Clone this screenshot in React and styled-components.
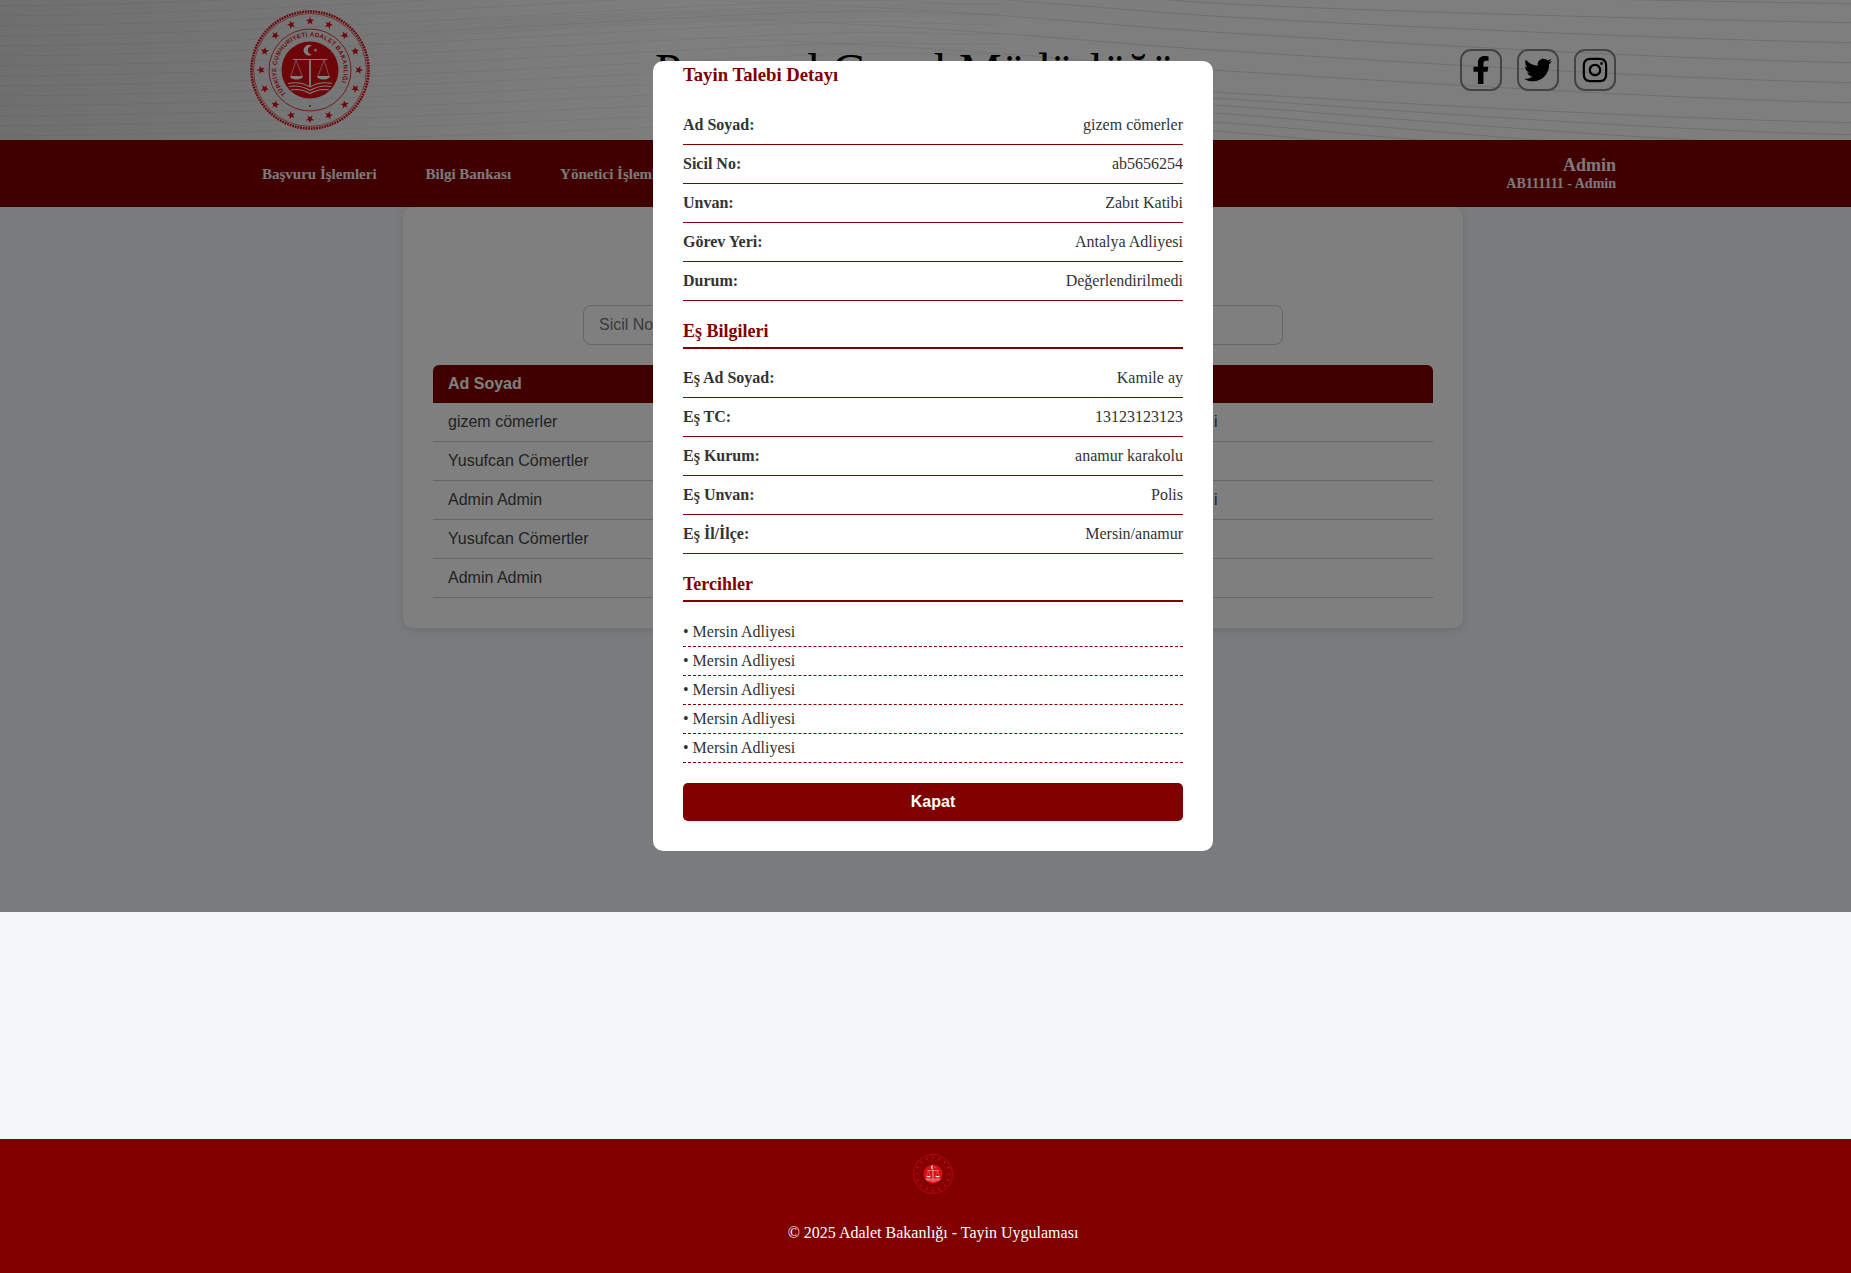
import React from 'react';
import styled, { createGlobalStyle } from 'styled-components';
import { FaFacebookF, FaTwitter, FaInstagram } from 'react-icons/fa';

const Global = createGlobalStyle`
  html, body { margin: 0; padding: 0; overflow-x: hidden; background: #f4f6f9; }
  body { font-family: "Liberation Serif", "Times New Roman", serif; color: #333; }
  * { box-sizing: border-box; }
`;

const Page = styled.div`
  position: relative;
  width: 1866px;
  min-height: 1273px;
  display: flex;
  flex-direction: column;
`;
const Header = styled.header`
  position: relative;
  height: 140px;
  background: linear-gradient(90deg, #dedede 0%, #eeeeee 18%, #fcfcfc 35%, #fdfdfd 100%);
  overflow: hidden;
`;
const Waves = styled.svg`
  position: absolute;
  inset: 0;
  width: 100%;
  height: 100%;
`;
const HeaderInner = styled.div`
  position: relative;
  width: 1366px;
  height: 100%;
  margin: 0 auto;
  display: flex;
  align-items: center;
  justify-content: space-between;
`;
const SiteTitle = styled.h1`
  margin: 0;
  font-size: 48px;
  font-weight: 400;
  color: #000;
  white-space: nowrap;
`;
const Socials = styled.div`
  display: flex;
  gap: 15px;
`;
const SocialLink = styled.a`
  width: 42px;
  height: 42px;
  border: 2px solid #888;
  border-radius: 11px;
  display: flex;
  align-items: center;
  justify-content: center;
  color: #000;
  font-size: 28px;
`;
const Nav = styled.nav`
  height: 67px;
  background: #800000;
`;
const NavInner = styled.div`
  width: 1366px;
  height: 100%;
  margin: 0 auto;
  padding-left: 12px;
  display: flex;
  align-items: center;
  justify-content: space-between;
`;
const NavLinks = styled.div`
  display: flex;
  gap: 49px;
  padding-top: 2px;
`;
const NavLink = styled.a`
  color: #fff;
  font-size: 15px;
  font-weight: 700;
  opacity: 0.95;
`;
const UserBox = styled.div`
  text-align: right;
  color: #fff;
  font-weight: 700;
  opacity: 0.95;
`;
const UserName = styled.div`
  font-size: 18px;
  line-height: 16px;
`;
const UserMeta = styled.div`
  margin-top: 4px;
  font-size: 14px;
  line-height: 14px;
`;
const Main = styled.main`
  flex: 1;
  display: flex;
  justify-content: center;
  align-items: flex-start;
`;
const Card = styled.section`
  width: 1060px;
  padding: 98px 30px 30px;
  background: #fff;
  border-radius: 10px;
  box-shadow: 0 2px 10px rgba(0, 0, 0, 0.1);
  font-family: "Liberation Sans", Arial, sans-serif;
`;
const SearchInput = styled.input`
  display: block;
  width: 700px;
  height: 40px;
  margin: 0 auto 20px;
  padding: 0 15px;
  border: 1px solid #ccc;
  border-radius: 8px;
  font: 16px "Liberation Sans", Arial, sans-serif;
  background: transparent;
  &::placeholder { color: #757575; }
`;
const Table = styled.table`
  width: 1000px;
  border-collapse: separate;
  border-spacing: 0;
  table-layout: fixed;
  font-size: 16px;
`;
const HeadCell = styled.th`
  height: 38px;
  padding: 0 15px;
  width: ${p => p.$width || 'auto'};
  text-align: left;
  background: #800000;
  color: #fff;
  font-weight: 700;
  &:first-child { border-top-left-radius: 6px; }
  &:last-child { border-top-right-radius: 6px; }
`;
const BodyCell = styled.td`
  height: 39px;
  padding: 0 15px 1px;
  color: #444;
  white-space: nowrap;
  overflow: hidden;
  border-bottom: 1px solid #ccc;
`;
const Footer = styled.footer`
  height: 134px;
  padding-top: 15px;
  background: #800000;
  color: #fff;
  text-align: center;
`;
const FooterText = styled.p`
  margin: 16px 0 0;
  font-size: 16px;
  line-height: 46px;
`;
const FooterLogoSlot = styled.div`
  display: flex;
  justify-content: center;
`;
const Overlay = styled.div`
  position: absolute;
  top: 0;
  left: 0;
  width: 100%;
  height: 912px;
  background: rgba(0, 0, 0, 0.5);
  display: flex;
  align-items: center;
  justify-content: center;
`;
const Modal = styled.div`
  width: 560px;
  height: 790px;
  padding: 3px 30px 30px;
  background: #fff;
  border-radius: 10px;
  display: flex;
  flex-direction: column;
`;
const ModalTitle = styled.h2`
  margin: 0 0 21px;
  font-size: 18.72px;
  line-height: 21px;
  color: #800000;
`;
const InfoRow = styled.div`
  display: flex;
  justify-content: space-between;
  padding: 10px 0;
  line-height: 18px;
  font-size: 16px;
  border-bottom: 1px solid #800000;
  color: #333;
`;
const InfoLabel = styled.strong`
  font-weight: 700;
`;
const SectionTitle = styled.h3`
  margin: 20px 0 10px;
  padding-bottom: 6px;
  font-size: 18px;
  line-height: 20px;
  color: #800000;
  border-bottom: 2px solid #800000;
`;
const PrefList = styled.ul`
  list-style: none;
  margin: 6px 0 20px;
  padding: 0;
`;
const PrefItem = styled.li`
  padding: 5px 0;
  line-height: 18px;
  font-size: 16px;
  border-bottom: 1px dashed #800000;
  color: #333;
`;
const CloseButton = styled.button`
  height: 38px;
  border: 0;
  border-radius: 5px;
  background: #800000;
  color: #fff;
  font: 700 16px "Liberation Sans", Arial, sans-serif;
`;

const STAR = 'M0,-3.6 L0.85,-1.15 L3.42,-1.1 L1.37,0.44 L2.11,2.91 L0,1.45 L-2.11,2.91 L-1.37,0.44 L-3.42,-1.1 L-0.85,-1.15 Z';
const RED = '#dc0d12';

function Logo({ size, compact }) {
  const stars = Array.from({ length: 16 }, (_, i) => (i * 22.5 * Math.PI) / 180);
  const id = compact ? 'ringc' : 'ring';
  return (
    <svg width={size} height={size} viewBox="0 0 120 120" aria-label="Adalet Bakanlığı">
      <circle cx="60" cy="60" r="58.5" fill="none" stroke={RED} strokeWidth="2.6" strokeDasharray="1.8 0.9" />
      <circle cx="60" cy="60" r="56.4" fill="none" stroke={RED} strokeWidth="0.6" />
      {stars.map((a, i) => (
        <path key={i} d={STAR} fill={RED} transform={`translate(${60 + 49 * Math.sin(a)} ${60 - 49 * Math.cos(a)}) rotate(${(a * 180) / Math.PI}) scale(1.2)`} />
      ))}
      <circle cx="60" cy="60" r="41" fill="none" stroke={RED} strokeWidth="0.8" />
      {!compact && (
        <>
          <defs>
            <path id={id} d="M 36.2 84 A 33.7 33.7 0 1 1 83.8 84" />
          </defs>
          <text fontFamily="Liberation Sans, Arial, sans-serif" fontSize="6.1" fontWeight="700" fill={RED} letterSpacing="0.32">
            <textPath href={`#${id}`}>TÜRKİYE CUMHURİYETİ ADALET BAKANLIĞI</textPath>
          </text>
        </>
      )}
      <circle cx="60" cy="96" r="1" fill={RED} />
      <circle cx="60" cy="60" r="28.5" fill={RED} />
      <path d="M62,36 a5.2,5.2 0 1 0 0,8.4 a4.2,4.2 0 1 1 0,-8.4 Z" fill="#fff" />
      <path d={STAR} fill="#fff" transform="translate(65.5 40.2) scale(0.6)" />
      <g stroke="#fff" strokeWidth="1.1" fill="none">
        <path d="M43,49.5 H77" />
        <path d="M60,49 V76" strokeWidth="1.8" />
        <path d="M46,50 L41,66 M46,50 L52,66 M74,50 L68,66 M74,50 L79,66" strokeWidth="0.6" />
      </g>
      <path d="M40,66 H53 a6.5,3.6 0 0 1 -13,0 Z M67,66 H80 a6.5,3.6 0 0 1 -13,0 Z" fill="#fff" />
      <g stroke="#fff" strokeWidth="1.1" fill="none">
        <path d="M38,73.5 Q50,71 60,77 Q70,71 82,73.5" />
        <path d="M39,76.5 Q50,74.5 60,80.5 Q70,74.5 81,76.5" />
        <path d="M41,80 Q50,78 60,83.5 Q70,78 79,80" />
      </g>
    </svg>
  );
}

const RIGHT_A = [-12, 3, 16, 32, 50, 70, 92, 98, 105, 113, 122, 131];
const RIGHT_B = [3, 22, 42, 62, 82, 102, 122, 134, 146, 158, 170, 182];

function WaveLines() {
  const left = Array.from({ length: 15 }, (_, i) => {
    const y = 6 + i * 10;
    return `M0,${y} C220,${y - 2} 420,${y - 8 - (14 - i) * 0.6} 680,${y - 20 - (14 - i) * 0.8} S900,${y - 30} 1000,${y - 32}`;
  });
  const crest = Array.from({ length: 7 }, (_, i) => {
    const y = 30 - i * 2;
    return `M330,${y + 14} C480,${y + 2} 620,${y - 6} 840,${y - 12} S1100,${y - 14} 1250,${y - 6}`;
  });
  const right = RIGHT_A.map((a, i) => {
    const b = RIGHT_B[i];
    return `M600,${a - 34} C900,${a - 30} 1100,${a - 7} 1213,${a} S1650,${b - 3} 1866,${b + 1}`;
  });
  return (
    <Waves viewBox="0 0 1866 140" aria-hidden="true">
      <defs>
        <linearGradient id="waveFade" gradientUnits="userSpaceOnUse" x1="600" y1="0" x2="1180" y2="0">
          <stop offset="0" stopColor="#000" stopOpacity="0" />
          <stop offset="1" stopColor="#000" stopOpacity="0.12" />
        </linearGradient>
        <linearGradient id="crestFade" gradientUnits="userSpaceOnUse" x1="330" y1="0" x2="1250" y2="0">
          <stop offset="0" stopColor="#000" stopOpacity="0" />
          <stop offset="0.3" stopColor="#000" stopOpacity="0.05" />
          <stop offset="1" stopColor="#000" stopOpacity="0" />
        </linearGradient>
      </defs>
      {left.map((d, i) => <path key={i} d={d} fill="none" stroke="#000" strokeOpacity="0.05" />)}
      {crest.map((d, i) => <path key={i} d={d} fill="none" stroke="url(#crestFade)" />)}
      {right.map((d, i) => <path key={i} d={d} fill="none" stroke="url(#waveFade)" />)}
    </Waves>
  );
}

const people = [
  ['gizem cömerler', 'ab5656254', 'Zabıt Katibi', 'Değerlendirilmedi'],
  ['Yusufcan Cömertler', 'ab1234567', 'Zabıt Katibi', 'Onaylandı'],
  ['Admin Admin', 'AB111111', 'Admin', 'Değerlendirilmedi'],
  ['Yusufcan Cömertler', 'ab1234567', 'Zabıt Katibi', 'Onaylandı'],
  ['Admin Admin', 'AB111111', 'Admin', 'Reddedildi'],
];
const base = [['Ad Soyad:', 'gizem cömerler'], ['Sicil No:', 'ab5656254'], ['Unvan:', 'Zabıt Katibi'], ['Görev Yeri:', 'Antalya Adliyesi'], ['Durum:', 'Değerlendirilmedi']];
const spouse = [['Eş Ad Soyad:', 'Kamile ay'], ['Eş TC:', '13123123123'], ['Eş Kurum:', 'anamur karakolu'], ['Eş Unvan:', 'Polis'], ['Eş İl/İlçe:', 'Mersin/anamur']];
const prefs = ['Mersin Adliyesi', 'Mersin Adliyesi', 'Mersin Adliyesi', 'Mersin Adliyesi', 'Mersin Adliyesi'];

const Rows = ({ items }) => items.map(([k, v]) => (
  <InfoRow key={k}>
    <InfoLabel>{k}</InfoLabel>
    <span>{v}</span>
  </InfoRow>
));

export default function App() {
  return (
    <Page>
      <Global />
      <Header>
        <WaveLines />
        <HeaderInner>
          <Logo size={120} />
          <SiteTitle>Personel Genel Müdürlüğü</SiteTitle>
          <Socials>
            <SocialLink><FaFacebookF /></SocialLink>
            <SocialLink><FaTwitter /></SocialLink>
            <SocialLink><FaInstagram /></SocialLink>
          </Socials>
        </HeaderInner>
      </Header>
      <Nav>
        <NavInner>
          <NavLinks>
            <NavLink>Başvuru İşlemleri</NavLink>
            <NavLink>Bilgi Bankası</NavLink>
            <NavLink>Yönetici İşlemleri</NavLink>
          </NavLinks>
          <UserBox>
            <UserName>Admin</UserName>
            <UserMeta>AB111111 - Admin</UserMeta>
          </UserBox>
        </NavInner>
      </Nav>
      <Main>
        <Card>
          <SearchInput placeholder="Sicil No ile ara" />
          <Table>
            <thead>
              <tr>
                <HeadCell $width="215px">Ad Soyad</HeadCell>
                <HeadCell $width="215px">Sicil No</HeadCell>
                <HeadCell $width="215px">Unvan</HeadCell>
                <HeadCell>Durum</HeadCell>
              </tr>
            </thead>
            <tbody>
              {people.map((row, i) => (
                <tr key={i}>
                  {row.map((c, j) => <BodyCell key={j}>{c}</BodyCell>)}
                </tr>
              ))}
            </tbody>
          </Table>
        </Card>
      </Main>
      <Footer>
        <FooterLogoSlot><Logo size={40} compact /></FooterLogoSlot>
        <FooterText>© 2025 Adalet Bakanlığı - Tayin Uygulaması</FooterText>
      </Footer>
      <Overlay>
        <Modal>
          <ModalTitle>Tayin Talebi Detayı</ModalTitle>
          <Rows items={base} />
          <SectionTitle>Eş Bilgileri</SectionTitle>
          <Rows items={spouse} />
          <SectionTitle>Tercihler</SectionTitle>
          <PrefList>
            {prefs.map((p, i) => <PrefItem key={i}>• {p}</PrefItem>)}
          </PrefList>
          <CloseButton>Kapat</CloseButton>
        </Modal>
      </Overlay>
    </Page>
  );
}
